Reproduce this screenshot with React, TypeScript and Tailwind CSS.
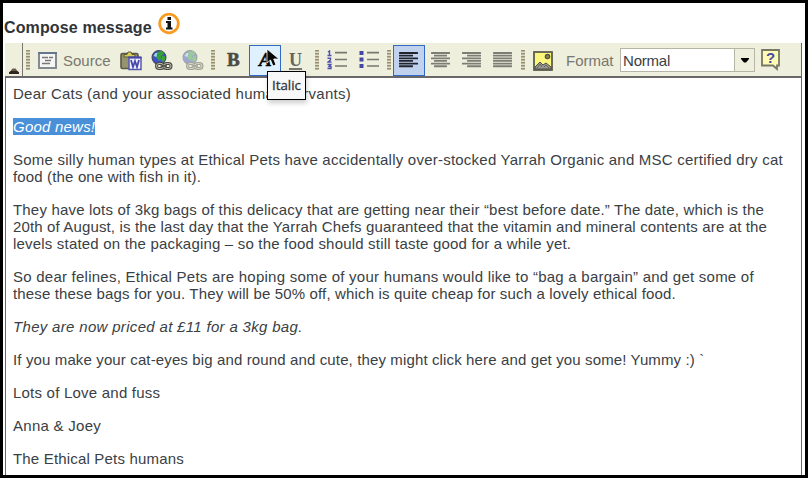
import type { ReactNode } from 'react';

function Grip({ className }: { className: string }) {
  return (
    <svg className={`h-5 w-1 shrink-0 ${className}`} viewBox="0 0 4 20" shapeRendering="crispEdges">
      <rect width="4" height="20" fill="#dddbc4" />
      {[0, 3, 6, 9, 12, 15, 18].map((y) => (
        <g key={y}>
          <rect y={y} width="4" height="2" fill="#b9b498" />
          <rect y={y} width="4" height="1" fill="#979073" />
        </g>
      ))}
    </svg>
  );
}

function Icon({ className, w, h, children }: { className: string; w: number; h: number; children: ReactNode }) {
  return (
    <svg className={`shrink-0 ${className}`} width={w} height={h} viewBox={`0 0 ${w} ${h}`}>
      {children}
    </svg>
  );
}

function Globe() {
  return (
    <>
      <circle cx="8" cy="7.5" r="6.9" fill="#3f50cf" stroke="#454b63" strokeWidth="1.2" />
      <path d="M6 2l5-1 2 2-1 2-2 1v3l-2 2-3-4 2-2z" fill="#35a03b" />
      <path d="M11 6l3 0 0 4-2 2-2-2z" fill="#38a33e" />
      <path d="M2.5 6l2-3 2 0-1 4z" fill="#9bdbe4" />
      <g fill="none" stroke="#4b4c43" strokeWidth="3">
        <rect x="5.5" y="13.5" width="7" height="5" rx="2.5" />
        <rect x="13" y="13.5" width="7" height="5" rx="2.5" />
      </g>
      <g fill="none" stroke="#b9b9ae" strokeWidth="1">
        <rect x="5.5" y="13.5" width="7" height="5" rx="2.5" />
        <rect x="13" y="13.5" width="7" height="5" rx="2.5" />
      </g>
      <path d="M9.5 16h6.5" stroke="#4b4c43" strokeWidth="1.6" />
    </>
  );
}

function Align({ rows, color, className }: { rows: number[][]; color: string; className: string }) {
  return (
    <Icon className={className} w={20} h={17}>
      {rows.map(([x, w], i) => (
        <rect key={i} x={x} y={i * 2.65 + 0.1} width={w} height="1.8" rx=".3" fill={color} />
      ))}
    </Icon>
  );
}

const leftRows = [[0, 19], [0, 14], [0, 19], [0, 14], [0, 19], [0, 14]];
const centerRows = [[0, 19], [3, 13], [0, 19], [3, 13], [0, 19], [3, 13]];
const rightRows = [[0, 19], [5, 14], [0, 19], [5, 14], [0, 19], [5, 14]];
const fullRows = [[0, 19], [0, 19], [0, 19], [0, 19], [0, 19], [0, 19]];

const paragraphs: { italic?: boolean; lines: { text: string; cls: string }[] }[] = [
  { lines: [{ text: 'Dear Cats (and your associated human servants)', cls: 'tracking-[0.24px]' }] },
  { italic: true, lines: [{ text: 'Good news!', cls: 'tracking-[0.22px] bg-[#4a90d9] text-white' }] },
  {
    lines: [
      { text: 'Some silly human types at Ethical Pets have accidentally over-stocked Yarrah Organic and MSC certified dry cat', cls: 'tracking-[0.228px]' },
      { text: 'food (the one with fish in it).', cls: 'tracking-[0.15px]' },
    ],
  },
  {
    lines: [
      { text: 'They have lots of 3kg bags of this delicacy that are getting near their “best before date.” The date, which is the', cls: 'tracking-[0.183px]' },
      { text: '20th of August, is the last day that the Yarrah Chefs guaranteed that the vitamin and mineral contents are at the', cls: 'tracking-[0.14px]' },
      { text: 'levels stated on the packaging – so the food should still taste good for a while yet.', cls: 'tracking-[0.19px]' },
    ],
  },
  {
    lines: [
      { text: 'So dear felines, Ethical Pets are hoping some of your humans would like to “bag a bargain” and get some of', cls: 'tracking-[0.24px]' },
      { text: 'these these bags for you. They will be 50% off, which is quite cheap for such a lovely ethical food.', cls: 'tracking-[0.155px]' },
    ],
  },
  { italic: true, lines: [{ text: 'They are now priced at £11 for a 3kg bag.', cls: 'tracking-[0.32px]' }] },
  { lines: [{ text: 'If you make your cat-eyes big and round and cute, they might click here and get you some! Yummy :) `', cls: 'tracking-[0.13px]' }] },
  { lines: [{ text: 'Lots of Love and fuss', cls: 'tracking-[0.22px]' }] },
  { lines: [{ text: 'Anna & Joey', cls: 'tracking-[0.27px]' }] },
  { lines: [{ text: 'The Ethical Pets humans', cls: 'tracking-[0.18px]' }] },
];

function Toolbar() {
  return (
    <div className="relative flex h-[33px] shrink-0 items-start bg-[#efefde]">
      <div className="flex h-[33px] w-[18px] shrink-0 items-end border-r border-[#77776f] pb-[2px] pl-1">
        <svg width="10" height="6" viewBox="0 0 10 6">
          <path d="M0 5L3.5 .5h3L10 5v1H0z" fill="#695a50" />
          <path d="M0 4.2L2 3h6l2 1.2V6H0z" fill="#30251f" />
        </svg>
      </div>
      <Grip className="mt-[7px] ml-[3px]" />
      <Icon className="mt-[9px] ml-2" w={19} h={17}>
        <rect x="1" y="1" width="17" height="15" fill="#f5f6f4" stroke="#858a91" strokeWidth="2" />
        <path d="M0 1h19" stroke="#66758c" strokeWidth="2" />
        <path d="M4 5.5h6M11 5.5h4M7 8.5h6M4 11.5h8" stroke="#777" strokeWidth="1.3" />
      </Icon>
      <span className="mt-[9px] ml-[6px] w-[50px] text-[15px] leading-[17px] text-[#77776f]">Source</span>
      <Icon className="mt-2 ml-[7px]" w={22} h={20}>
        <rect x="1" y="2.5" width="17" height="15" rx="1.5" fill="#96946c" stroke="#5b5946" strokeWidth="1.6" />
        <path d="M4 6V3.5h3l1-2.5h3l1 2.5h3V6z" fill="#d7cf56" stroke="#5d593b" />
        <rect x="9" y="6.5" width="12" height="12" fill="#f1f2ff" stroke="#5759ae" strokeWidth="1.5" />
        <path d="M8.5 6.5h13" stroke="#4547aa" strokeWidth="2" />
        <path d="M11 9l2 7 2-6 2 6 2-7" fill="none" stroke="#4547aa" strokeWidth="1.8" />
      </Icon>
      <Icon className="mt-[7px] ml-[9px]" w={22} h={21}><Globe /></Icon>
      <Icon className="mt-[7px] ml-[9px] opacity-45" w={22} h={21}><Globe /></Icon>
      <Grip className="mt-[7px] ml-[7px]" />
      <span className="mt-[6px] ml-3 w-[15px] font-['Liberation_Serif',serif] text-[19px] leading-[22px] font-bold text-[#4b4b45] [-webkit-text-stroke:0.6px_#4b4b45]">B</span>
      <div className="mt-[2px] ml-[7px] h-[31px] w-8 shrink-0 border border-[#316ac5] bg-[#dff1ff] pt-[3px] pl-[9px]">
        <span className="font-['Liberation_Serif',serif] text-[19px] leading-[22px] font-bold text-black italic [-webkit-text-stroke:0.5px_black]">A</span>
      </div>
      <span className="mt-[6px] ml-2 w-[14px] font-['Liberation_Serif',serif] text-[18px] leading-[22px] font-bold text-[#65655e]">
        <span className="block h-[21px] w-[13px] border-b-2 border-[#77776f]">U</span>
      </span>
      <Grip className="mt-[7px] ml-3" />
      <Icon className="mt-[7px] ml-2" w={20} h={20}>
        <path d="M8 2.7h12M8 9.5h12M8 16h12" stroke="#77776f" strokeWidth="1.7" />
        <path d="M1 2l1.5-1v4.5M.5 5.5h4M.5 8.2h3v1.8L1 12h3.5M.5 14.5h3.3L2 16.5h2v2H.5" fill="none" stroke="#5052aa" strokeWidth="1.4" />
      </Icon>
      <Icon className="mt-[7px] ml-3" w={20} h={20}>
        <path d="M8 2.7h12M8 9.5h12M8 16h12" stroke="#77776f" strokeWidth="1.7" />
        <path d="M.5 1h4v4h-4zM.5 7.5h4v4h-4zM.5 14h4v4h-4z" fill="#4547a5" />
      </Icon>
      <Grip className="mt-[7px] ml-2" />
      <div className="mt-[2px] ml-[2px] h-[31px] w-8 shrink-0 border border-[#316ac5] bg-[#c1d2ee]">
        <Align className="mt-[6px] ml-[5px]" rows={leftRows} color="#22242e" />
      </div>
      <Align className="mt-[9px] ml-[6px]" rows={centerRows} color="#7d7d75" />
      <Align className="mt-[9px] ml-[11px]" rows={rightRows} color="#7d7d75" />
      <Align className="mt-[9px] ml-[11px]" rows={fullRows} color="#7d7d75" />
      <Grip className="mt-[7px] ml-2" />
      <Icon className="mt-2 ml-2" w={20} h={20}>
        <rect x="1" y="1" width="18" height="18" fill="#fbf77e" stroke="#5e5d4c" strokeWidth="1.8" />
        <circle cx="14.5" cy="5.5" r="2.2" fill="#898650" stroke="#4d4c3f" strokeWidth="1.2" />
        <path d="M2 18v-2l5-5 3 3 3-2 5 4v2z" fill="#999a91" stroke="#4d4d49" />
        <path d="M4 17l3-4 2 3M11 16l2-2 3 3" fill="none" stroke="#65655e" />
      </Icon>
      <span className="mt-[9px] ml-[13px] w-[54px] text-[15px] leading-[17px] text-[#77776f]">Format</span>
      <div className="mt-[5px] flex h-6 w-[135px] shrink-0 border border-[#b5b6a6] bg-white">
        <span className="w-[113px] pt-[3px] pl-[2px] text-[15px] leading-[17px] tracking-[-0.2px] text-[#383e43]">Normal</span>
        <span className="flex flex-1 items-center justify-center border-l border-[#b5b6a6] bg-[#efefde]">
          <svg width="8" height="5" viewBox="0 0 8 5"><path d="M0 0h8v1L5 4.5H3L0 1z" /></svg>
        </span>
      </div>
      <Icon className="mt-[6px] ml-[6px]" w={20} h={22}>
        <path d="M1 1h17v15.5h-2V20l-4-3.5H1z" fill="#fffbb5" stroke="#777765" strokeWidth="1.8" />
        <text x="5" y="14" fontFamily="Liberation Sans, sans-serif" fontWeight="bold" fontSize="15" fill="#484aa5">?</text>
      </Icon>
      <svg className="absolute top-[6px] left-[261px] z-20" width="14" height="18" viewBox="0 0 14 18">
        <path d="M1 0v14l3.5-3 2.5 6 3-1.2L7.7 10H13z" fill="#080808" stroke="#fff" strokeWidth=".8" />
      </svg>
      <div className="absolute top-7 left-[262px] z-10 flex h-[29px] w-[39px] items-center justify-center border border-black bg-[#f8f8f8] pt-px font-['Open_Sans',sans-serif] text-[13.3px] text-[#303438] shadow-[1px_3px_5px_rgba(0,0,0,0.2)] [-webkit-text-stroke:0.3px_#303438]">
        Italic
      </div>
    </div>
  );
}

export default function App() {
  return (
    <div className="flex h-[478px] w-[808px] flex-col overflow-hidden border-[3px] border-black bg-white font-['Liberation_Sans',sans-serif]">
      <div className="flex h-10 shrink-0 items-start pl-px">
        <h1 className="mt-[15px] w-[154px] text-[16px] leading-[20px] font-bold tracking-[0.13px] whitespace-nowrap text-[#303438]">Compose message</h1>
        <svg className="mt-[10px]" width="22" height="22" viewBox="0 0 22 22">
          <circle cx="11" cy="10.5" r="9.3" fill="white" stroke="#fa9b21" strokeWidth="2.8" />
          <path d="M9.5 4h3.5v3H9.5zM8 8h5v6.5h1.5v2H8v-2h1.5V10H8z" fill="#141414" />
        </svg>
      </div>
      <div className="mr-[3px] ml-[2px] flex min-h-0 flex-1 flex-col border-r border-[#65656a]">
        <Toolbar />
        <main className="min-h-0 flex-1 overflow-hidden border-t-2 border-l border-[#696767] pt-[7px] pl-[7px] text-[15px] leading-[17px] text-[#3a4044]">
          {paragraphs.map((p, i) => (
            <p key={i} className={`mb-4 ${p.italic ? 'italic' : ''}`}>
              {p.lines.map((l) => (
                <span key={l.text} className="block whitespace-nowrap">
                  <span className={`inline-block h-[17px] ${l.cls}`}>{l.text}</span>
                </span>
              ))}
            </p>
          ))}
        </main>
      </div>
    </div>
  );
}
